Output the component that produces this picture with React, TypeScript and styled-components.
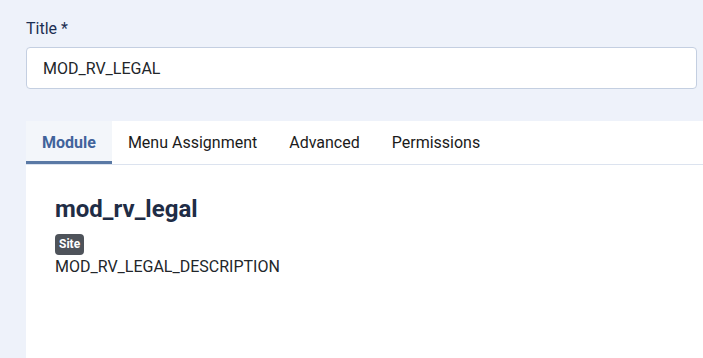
import styled, { createGlobalStyle } from 'styled-components';

const GlobalStyle = createGlobalStyle`
  html, body {
    margin: 0;
    padding: 0;
    background: #eef2fa;
    font-family: Roboto, "Liberation Sans", Arial, sans-serif;
    overflow: hidden;
  }
`;

const Page = styled.div`
  display: flex;
  flex-direction: column;
  min-height: 358px;
  padding: 17px 0 0 26px;
  box-sizing: border-box;
`;

const Field = styled.div`
  display: flex;
  flex-direction: column;
  gap: 6px;
  margin-right: 6px;
`;

const Label = styled.label`
  font-size: 16px;
  line-height: 24px;
  color: #1c2f52;
`;

const Input = styled.input`
  height: 42px;
  box-sizing: border-box;
  padding: 0 16px;
  border: 1px solid #c4cfe1;
  border-radius: 4px;
  background: #fff;
  font-family: inherit;
  font-size: 16px;
  color: #22262a;
  outline: none;
`;

const Card = styled.section`
  flex: 1;
  margin-top: 32px;
  background: #fff;
  display: flex;
  flex-direction: column;
`;

const TabList = styled.div`
  display: flex;
  border-bottom: 1px solid #dce3ef;
`;

const Tab = styled.button<{ $active?: boolean }>`
  border: 0;
  border-bottom: 3px solid ${(p) => (p.$active ? '#5a79a5' : 'transparent')};
  background: ${(p) => (p.$active ? '#f3f6fa' : 'transparent')};
  padding: 10px 16px 6px;
  font-family: inherit;
  font-size: 16px;
  line-height: 24px;
  font-weight: ${(p) => (p.$active ? 700 : 400)};
  color: ${(p) => (p.$active ? '#41639b' : '#1b1b1b')};
  cursor: pointer;
`;

const Panel = styled.div`
  padding: 30px 29px;
  display: flex;
  flex-direction: column;
  align-items: flex-start;
`;

const Heading = styled.h2`
  margin: 0 0 10px;
  font-size: 24px;
  line-height: 29px;
  font-weight: 700;
  color: #1f2d46;
`;

const Badge = styled.span`
  display: inline-block;
  padding: 3px 4px;
  border-radius: 4px;
  background: #4e535a;
  color: #fff;
  font-size: 12px;
  line-height: 15px;
  font-weight: 700;
`;

const Description = styled.p`
  margin: 0;
  font-size: 16px;
  line-height: 24px;
  color: #22262a;
`;

const tabs = ['Module', 'Menu Assignment', 'Advanced', 'Permissions'];

export default function App() {
  return (
    <>
      <GlobalStyle />
      <Page>
        <Field>
          <Label htmlFor="title">Title *</Label>
          <Input id="title" defaultValue="MOD_RV_LEGAL" />
        </Field>
        <Card>
          <TabList>
            {tabs.map((t, i) => (
              <Tab key={t} $active={i === 0}>
                {t}
              </Tab>
            ))}
          </TabList>
          <Panel>
            <Heading>mod_rv_legal</Heading>
            <Badge>Site</Badge>
            <Description>MOD_RV_LEGAL_DESCRIPTION</Description>
          </Panel>
        </Card>
      </Page>
    </>
  );
}
